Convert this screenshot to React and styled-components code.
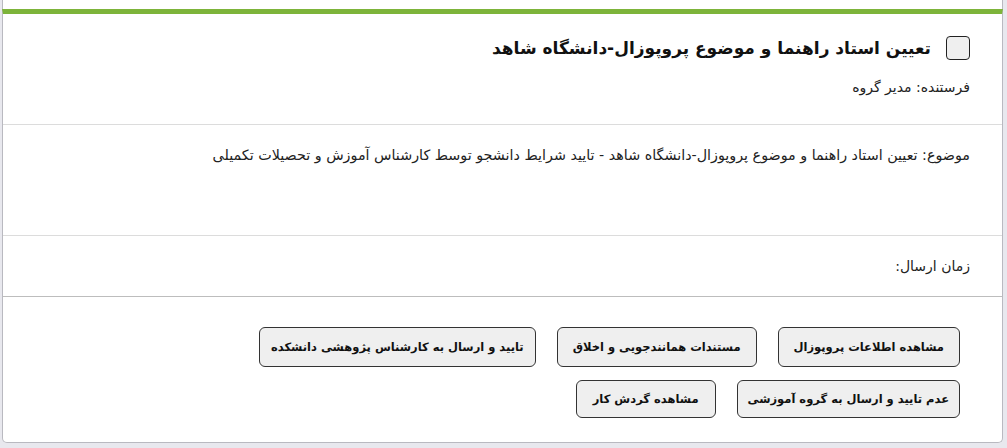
import React from "react";
import styled, { createGlobalStyle } from "styled-components";

const Global = createGlobalStyle`
  html, body { margin: 0; padding: 0; background: #e8e8ee; }
  body { font-family: "DejaVu Sans", "Noto Sans", sans-serif; color: #222; }
  * { box-sizing: border-box; }
`;

const Page = styled.div`
  direction: rtl;
  padding: 0 4px 5px 2px;
`;

const PrevCardTail = styled.div`
  height: 9px;
  background: #fff;
  border-left: 1px solid #b9b9c0;
  border-right: 1px solid #b9b9c0;
`;

const Card = styled.div`
  background: #fff;
  border: 1px solid #b9b9c0;
  border-top: 5px solid #7db43a;
  border-radius: 0 0 5px 5px;
`;

const Section = styled.div`
  padding: ${(p) => p.$pad || "20px 36px 16px 36px"};
  min-height: ${(p) => p.$h || "auto"};
  border-bottom: ${(p) => (p.$last ? "none" : `1px solid ${p.$line || "#dcdcdc"}`)};
`;

const TitleRow = styled.div`
  display: flex;
  align-items: center;
  gap: 15px;
`;

const Check = styled.span`
  width: 24px;
  height: 24px;
  border: 1px solid #222;
  border-radius: 4px;
  background: #efefef;
  flex: none;
`;

const Title = styled.h1`
  margin: 0;
  font-size: 17px;
  font-weight: bold;
  color: #111;
`;

const Text = styled.div`
  font-size: ${(p) => p.$size || "14px"};
  margin-top: ${(p) => p.$mt || "0"};
  color: #222;
`;

const Buttons = styled.div`
  display: flex;
  flex-wrap: wrap;
  gap: 13px 21px;
  width: 722px;
`;

const Btn = styled.button`
  font-family: inherit;
  font-size: 11.5px;
  font-weight: bold;
  color: #111;
  background: #efefef;
  border: 1px solid #333;
  border-radius: 6px;
  height: ${(p) => (p.$short ? "38px" : "40px")};
  padding: 0 ${(p) => p.$padX || "15px"};
  cursor: pointer;
`;

const buttons = [
  { label: "مشاهده اطلاعات پروپوزال" },
  { label: "مستندات همانندجویی و اخلاق" },
  { label: "تایید و ارسال به کارشناس پژوهشی دانشکده", padX: "11px" },
  { label: "عدم تایید و ارسال به گروه آموزشی", padX: "10px", short: true },
  { label: "مشاهده گردش کار", padX: "16px", short: true },
];

export default function App() {
  return (
    <>
      <Global />
      <Page>
        <PrevCardTail />
        <Card>
          <Section $pad="22px 32px 0 36px" $h="111px">
            <TitleRow>
              <Check />
              <Title>تعیین استاد راهنما و موضوع پروپوزال-دانشگاه شاهد</Title>
            </TitleRow>
            <Text $mt="19px">فرستنده: مدیر گروه</Text>
          </Section>
          <Section $pad="22px 32px 0 36px" $h="111px">
            <Text $size="14.3px">موضوع: تعیین استاد راهنما و موضوع پروپوزال-دانشگاه شاهد - تایید شرایط دانشجو توسط کارشناس آموزش و تحصیلات تکمیلی</Text>
          </Section>
          <Section $pad="22px 32px 0 36px" $h="61px" $line="#bdbdbd">
            <Text>زمان ارسال:</Text>
          </Section>
          <Section $pad="30px 42px 24px 36px" $last>
            <Buttons>
              {buttons.map((b) => (
                <Btn key={b.label} $short={b.short} $padX={b.padX}>
                  {b.label}
                </Btn>
              ))}
            </Buttons>
          </Section>
        </Card>
      </Page>
    </>
  );
}
